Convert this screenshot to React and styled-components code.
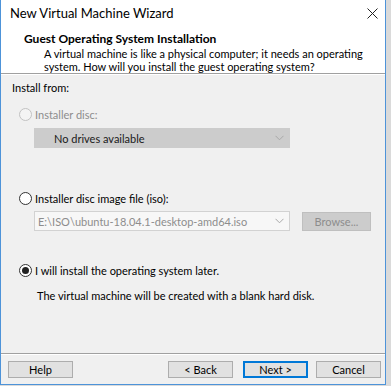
import styled, { createGlobalStyle } from "styled-components";

const GlobalStyle = createGlobalStyle`
    html, body {
        margin: 0;
        padding: 0;
        background: #dadada;
    }
    body {
        font-family: Lato, "Noto Sans", "Liberation Sans", sans-serif;
        font-size: 11px;
        color: #000;
    }
`
const Page = styled.div`
    width: 391px;
    height: 386px;
    background: #dadada;
    overflow: hidden;
`
const Window = styled.div`
    width: 386px;
    height: 385px;
    box-sizing: border-box;
    border: 1px solid #4d93d9;
    border-top: none;
    background: #f0f0f0;
    display: flex;
    flex-direction: column;
`
const TopArea = styled.div`
    height: 73px;
    background: #fff;
    flex-shrink: 0;
`
const TitleBar = styled.div`
    height: 26px;
    display: flex;
    align-items: center;
    justify-content: space-between;
    padding: 0 7px 0 9px;
    line-height: 14px;
    font-size: 13px;
`
const HeaderTitle = styled.div`
    font-weight: bold;
    font-size: 12px;
    line-height: 14px;
    margin: 6px 0 0 23px;
`
const HeaderDesc = styled.div`
    margin: 1px 0 0 43px;
    line-height: 13px;
    white-space: nowrap;
`
const Separator = styled.div`
    height: 1px;
    background: #a0a0a0;
    border-bottom: 1px solid #fff;
    flex-shrink: 0;
`
const Body = styled.div`
    flex: 1;
    padding: 6px 0 0 11px;
    display: flex;
    flex-direction: column;
`
const Label = styled.div`
    line-height: 14px;
    margin-top: ${p => p.$top || 0}px;
    margin-left: ${p => p.$left || 0}px;
    color: ${p => p.$disabled ? "#8d8d8d" : "#000"};
`
const RadioRow = styled.label`
    display: flex;
    align-items: center;
    gap: 3px;
    height: 14px;
    margin-top: ${p => p.$top}px;
    margin-left: 7px;
    color: ${p => p.$disabled ? "#8d8d8d" : "#000"};
`
const RadioDot = styled.span`
    width: 11px;
    height: 11px;
    border-radius: 50%;
    border: 1px solid ${p => p.$disabled ? "#c2c2c2" : "#333"};
    background: ${p => p.$disabled ? "#f4f4f4" : "#fff"};
    display: flex;
    align-items: center;
    justify-content: center;
    flex-shrink: 0;
    &::after {
        content: "";
        width: 7px;
        height: 7px;
        border-radius: 50%;
        background: #222;
        display: ${p => p.$checked ? "block" : "none"};
    }
`
const ComboRow = styled.div`
    display: flex;
    align-items: center;
    gap: 12px;
    margin-top: ${p => p.$top}px;
    margin-left: 22px;
`
const Combo = styled.div`
    width: 256px;
    height: 20px;
    box-sizing: border-box;
    display: flex;
    align-items: center;
    justify-content: space-between;
    padding: 0 5px 0 ${p => p.$padLeft}px;
    background: ${p => p.$filled ? "#cccccc" : "#f7f7f7"};
    border: 1px solid ${p => p.$filled ? "#cccccc" : "#d2d2d2"};
    color: ${p => p.$filled ? "#1a1a1a" : "#8d8d8d"};
`
const Chevron = () => (
    <svg width="9" height="6" viewBox="0 0 9 6">
        <path d="M0.5 0.8 L4.5 4.8 L8.5 0.8" fill="none" stroke="#a8a8a8" strokeWidth="1" />
    </svg>
)
const BrowseButton = styled.div`
    width: 69px;
    height: 19px;
    box-sizing: border-box;
    background: #cccccc;
    border: 1px solid #bfbfbf;
    color: #8d8d8d;
    display: flex;
    align-items: center;
    justify-content: center;
    margin-top: 1px;
`
const Footer = styled.div`
    height: 29px;
    display: flex;
    padding: 6px 4px 0 7px;
    box-sizing: border-box;
    flex-shrink: 0;
`
const Button = styled.div`
    width: 65px;
    height: 17px;
    box-sizing: border-box;
    background: #e1e1e1;
    border: 1px solid ${p => p.$default ? "#0078d7" : "#adadad"};
    box-shadow: ${p => p.$default ? "inset 0 0 0 1px #0078d7" : "none"};
    display: flex;
    align-items: center;
    justify-content: center;
    margin-left: ${p => p.$gap || 0}px;
`
const Spacer = styled.div`
    flex: 1;
`

function CloseIcon(){
    return(
        <svg width="11" height="11" viewBox="0 0 11 11">
            <path d="M0.5 0.5 L10.5 10.5 M10.5 0.5 L0.5 10.5" stroke="#222" strokeWidth="1" />
        </svg>
    )
}

function App(){
    return(
        <Page>
            <GlobalStyle/>
            <Window>
                <TopArea>
                    <TitleBar>
                        <span>New Virtual Machine Wizard</span>
                        <CloseIcon/>
                    </TitleBar>
                    <HeaderTitle>Guest Operating System Installation</HeaderTitle>
                    <HeaderDesc>
                        A virtual machine is like a physical computer; it needs an operating<br/>
                        system. How will you install the guest operating system?
                    </HeaderDesc>
                </TopArea>
                <Separator/>
                <Body>
                    <Label>Install from:</Label>
                    <RadioRow $top={12} $disabled>
                        <RadioDot $disabled/>
                        Installer disc:
                    </RadioRow>
                    <ComboRow $top={7}>
                        <Combo $filled $padLeft={19}>
                            No drives available
                            <Chevron/>
                        </Combo>
                    </ComboRow>
                    <RadioRow $top={43}>
                        <RadioDot/>
                        Installer disc image file (iso):
                    </RadioRow>
                    <ComboRow $top={6}>
                        <Combo $padLeft={3}>
                            E:\ISO\ubuntu-18.04.1-desktop-amd64.iso
                            <Chevron/>
                        </Combo>
                        <BrowseButton>Browse...</BrowseButton>
                    </ComboRow>
                    <RadioRow $top={32}>
                        <RadioDot $checked/>
                        I will install the operating system later.
                    </RadioRow>
                    <Label $top={12} $left={25}>The virtual machine will be created with a blank hard disk.</Label>
                </Body>
                <Separator/>
                <Footer>
                    <Button>Help</Button>
                    <Spacer/>
                    <Button>&lt; Back</Button>
                    <Button $default $gap={10}>Next &gt;</Button>
                    <Button $gap={8}>Cancel</Button>
                </Footer>
            </Window>
        </Page>
    )
}

export default App
